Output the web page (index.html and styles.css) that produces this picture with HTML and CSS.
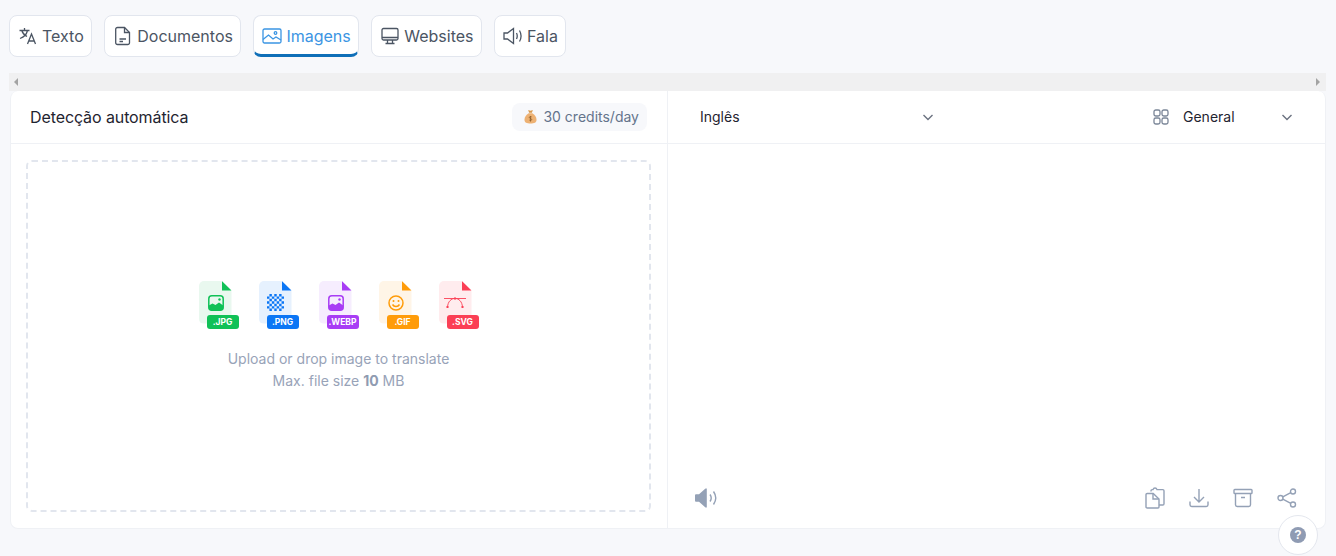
FILE: index.html
```html
<!DOCTYPE html>
<html lang="pt">
<head>
    <meta charset="UTF-8">
    <meta name="viewport" content="width=device-width, initial-scale=1.0">
    <title>Tradutor - Imagens</title>
    <link rel="stylesheet" href="styles.css">
</head>

<body>
    <div class="tabs">
        <button class="tab">
            <svg class="tab-icon" viewBox="0 0 20 20"><path d="M1.500 4.500h10M6.500 2v2.500M9.500 4.500c-.8 3.500-3.500 6.500-7.500 8M3.800 4.500c.8 2.700 2.700 4.700 5.200 6"/><path d="M9.500 18l4-10 4 10M11 15h5"/></svg>
            Texto
        </button>
        <button class="tab">
            <svg class="tab-icon" viewBox="0 0 20 20"><path d="M4.500 1.500h7l5 5v10.200a1.800 1.800 0 0 1-1.800 1.800H4.500a1.800 1.800 0 0 1-1.800-1.800V3.300a1.800 1.800 0 0 1 1.800-1.800z"/><path d="M11.500 1.500v5h5M6.500 13h6.500M6.500 15.500h3.500"/></svg>
            Documentos
        </button>
        <button class="tab active">
            <svg class="tab-icon" viewBox="0 0 20 20"><rect x="1" y="3" width="18" height="14" rx="1.500"/><path d="M1 13.500l5.500-4.500 4.500 4 3-2 5 3"/><circle cx="13.500" cy="7" r="1.300"/></svg>
            Imagens
        </button>
        <button class="tab">
            <svg class="tab-icon" viewBox="0 0 20 20"><rect x="2" y="2.500" width="16" height="11.500" rx="1.500"/><path d="M2 11.500h16M7.500 14v3M12.500 14v3M5.500 17.500h9"/></svg>
            Websites
        </button>
        <button class="tab">
            <svg class="tab-icon" viewBox="0 0 20 20"><path d="M1 7h3.500L10.500 2.500v15L4.500 13H1z"/><path d="M13.500 7c1 2 1 4 0 6M16.500 4.500c2 3.500 2 7.500 0 11"/></svg>
            Fala
        </button>
    </div>

    <div class="scroll-track">
        <span class="scroll-arrow left"></span>
        <span class="scroll-arrow right"></span>
    </div>

    <div class="panel">
        <div class="pane source">
            <div class="pane-header">
                <span class="lang-name">Detecção automática</span>
                <span class="credits">
                    <svg class="credits-icon" viewBox="0 0 14 16">
                        <path class="bag-top" d="M4.500 1l2.500.8L9.500 1 8.500 4h-3z"/>
                        <path class="bag" d="M5 4.500h4c2.500 1.500 4.500 4 4.500 7 0 3-2.500 4-6.500 4s-6.500-1-6.500-4c0-3 2-5.500 4.500-7z"/>
                        <path class="bag-mark" d="M8.300 8.500c-.8-.7-2.600-.6-2.600.6s2.600.8 2.600 2.100-1.800 1.300-2.600.6M7 7.500v6"/>
                    </svg>
                    30 credits/day
                </span>
            </div>
            <div class="pane-body">
                <div class="dropzone">
                    <div class="file-types">
                        <div class="file-type jpg">
                            <span class="file-sheet"></span>
                            <svg class="file-glyph" viewBox="0 0 16 16"><rect x=".8" y=".8" width="14.400" height="14.400" rx="3" class="ln"/><path class="fl" d="M.8 10.500l3.700-2 3 1.500L11 7.500l4.200 3v2a2.700 2.700 0 0 1-2.700 2.700h-9a2.700 2.700 0 0 1-2.700-2.700z"/><circle class="fl" cx="11.500" cy="4.500" r="1.200"/></svg>
                            <span class="file-tag">.JPG</span>
                        </div>
                        <div class="file-type png">
                            <span class="file-sheet"></span>
                            <svg class="file-glyph checker" viewBox="1 1 14 14"><path class="fl" d="M3 1h2v2H3zM7 1h2v2H7zM11 1h2v2h-2zM1 3h2v2H1zM5 3h2v2H5zM9 3h2v2H9zM13 3h2v2h-2zM3 5h2v2H3zM7 5h2v2H7zM11 5h2v2h-2zM1 7h2v2H1zM5 7h2v2H5zM9 7h2v2H9zM13 7h2v2h-2zM3 9h2v2H3zM7 9h2v2H7zM11 9h2v2h-2zM1 11h2v2H1zM5 11h2v2H5zM9 11h2v2H9zM13 11h2v2h-2zM3 13h2v2H3zM7 13h2v2H7zM11 13h2v2h-2z"/></svg>
                            <span class="file-tag">.PNG</span>
                        </div>
                        <div class="file-type webp">
                            <span class="file-sheet"></span>
                            <svg class="file-glyph" viewBox="0 0 16 16"><rect x=".8" y=".8" width="14.400" height="14.400" rx="3" class="ln"/><path class="fl" d="M.8 10.500l3.700-2 3 1.500L11 7.500l4.200 3v2a2.700 2.700 0 0 1-2.700 2.700h-9a2.700 2.700 0 0 1-2.700-2.700z"/><circle class="fl" cx="11.500" cy="4.500" r="1.200"/></svg>
                            <span class="file-tag">.WEBP</span>
                        </div>
                        <div class="file-type gif">
                            <span class="file-sheet"></span>
                            <svg class="file-glyph" viewBox="0 0 16 16"><circle class="ln" cx="8" cy="8" r="7"/><circle class="fl" cx="5.500" cy="6" r="1"/><circle class="fl" cx="10.500" cy="6" r="1"/><path class="ln" d="M4.500 9.500c1.500 2.500 5.500 2.500 7 0"/></svg>
                            <span class="file-tag">.GIF</span>
                        </div>
                        <div class="file-type svg">
                            <span class="file-sheet"></span>
                            <svg class="file-glyph wide" viewBox="0 0 24 16"><path class="thin" d="M1 3.500h22M4.500 12C5 6.500 8 3.500 12 3.500s7 3 7.500 8.500"/><rect class="fl" x="3.500" y="11" width="2" height="2"/><rect class="fl" x="18.500" y="11" width="2" height="2"/><rect class="fl" x="11" y="2.500" width="2" height="2"/></svg>
                            <span class="file-tag">.SVG</span>
                        </div>
                    </div>
                    <p class="drop-hint">Upload or drop image to translate</p>
                    <p class="drop-hint">Max. file size <b>10</b> MB</p>
                </div>
            </div>
        </div>

        <div class="pane target">
            <div class="pane-header">
                <div class="select lang-select">
                    <span>Inglês</span>
                    <svg class="chevron" viewBox="0 0 12 12"><path d="M1.500 4l4.500 4.500L10.500 4"/></svg>
                </div>
                <div class="select model-select">
                    <svg class="grid-icon" viewBox="0 0 16 16"><rect x="1" y="1" width="6" height="6" rx="1.800"/><rect x="9" y="1" width="6" height="6" rx="1.800"/><rect x="1" y="9" width="6" height="6" rx="1.800"/><rect x="9" y="9" width="6" height="6" rx="1.800"/></svg>
                    <span class="model-name">General</span>
                    <svg class="chevron" viewBox="0 0 12 12"><path d="M1.500 4l4.500 4.500L10.500 4"/></svg>
                </div>
            </div>
            <div class="result"></div>
            <div class="toolbar">
                <svg class="speaker" viewBox="0 0 22 20"><path class="solid" d="M0 7.500c0-.8.500-1.300 1.300-1.300H4L10.500 0.500h1.300v19h-1.300L4 13.800H1.300c-.8 0-1.300-.5-1.300-1.300z"/><path d="M15 6.500c1.400 2 1.400 5 0 7M18.500 3.500c2.800 4 2.800 9 0 13"/></svg>
                <div class="tools">
                    <svg viewBox="0 0 20 22"><path d="M6 4.500V3.800c0-.7.500-1.200 1.200-1.200H8c.3-1 1-1.600 2-1.600s1.700.6 2 1.600h.8L17.800 2.600c.7 0 1.200.5 1.200 1.200v13c0 .7-.5 1.200-1.200 1.200H14"/><path d="M2.200 6.500h6L14 12v8c0 .6-.5 1-1 1H2.200c-.6 0-1.200-.5-1.200-1V7.500c0-.5.600-1 1.200-1z"/><path d="M8 6.500V12h6"/></svg>
                    <svg viewBox="0 0 20 20"><path d="M10 1v12.500M5 9l5 5 5-5M1 13.500v3.300c0 1 .8 1.700 1.700 1.700h14.600c.9 0 1.700-.7 1.700-1.700v-3.300"/></svg>
                    <svg viewBox="0 0 20 20"><rect x="1" y="1.500" width="18" height="4" rx=".8"/><path d="M2.500 5.500v11.300c0 .9.800 1.700 1.700 1.700h11.600c.9 0 1.700-.8 1.700-1.700V5.500M8 9.500h4"/></svg>
                    <svg viewBox="0 0 20 20"><circle cx="16" cy="3.500" r="2.500"/><circle cx="3.500" cy="10" r="2.500"/><circle cx="16" cy="16.500" r="2.500"/><path d="M5.800 8.800l8-4.200M5.800 11.200l8 4.200"/></svg>
                </div>
            </div>
        </div>
    </div>

    <button class="help-button"><span class="help-mark">?</span></button>
</body>
</html>
```

FILE: styles.css
```css
* { margin: 0; padding: 0; box-sizing: border-box; }

body {
    font-family: 'Inter', 'Liberation Sans', sans-serif;
    background: #f7f8fb;
    color: #1f2937;
    height: 556px;
    overflow: hidden;
    padding: 15px 10px 0 9px;
}

.tabs {
    display: flex;
    gap: 12px;
    margin-bottom: 16px;
}

.tab {
    display: flex;
    align-items: center;
    gap: 4px;
    height: 42px;
    padding: 0 7.500px 0 8px;
    background: #ffffff;
    border: 1px solid #e2e6ee;
    border-radius: 8px;
    font-family: inherit;
    font-size: 16px;
    color: #4b5563;
    white-space: nowrap;
}

.tab-icon {
    width: 20px;
    height: 20px;
    fill: none;
    stroke: #4b5563;
    stroke-width: 1.300;
}

.tab.active {
    color: #3b95e3;
    border-bottom: 3px solid #0f6fb8;
    padding-top: 2px;
}

.tab.active .tab-icon { stroke: #3b95e3; }

.scroll-track {
    display: flex;
    justify-content: space-between;
    align-items: center;
    height: 18px;
    padding: 0 6px 0 5px;
    background: #f0f0f1;
}

.scroll-arrow {
    width: 0;
    height: 0;
    border-top: 4px solid transparent;
    border-bottom: 4px solid transparent;
}

.scroll-arrow.left { border-right: 4px solid #a3a3a3; }
.scroll-arrow.right { border-left: 4px solid #a3a3a3; }

.panel {
    display: flex;
    height: 438px;
    margin-left: 1px;
    background: #ffffff;
    border: 1px solid #eff1f5;
    border-top: none;
    border-radius: 8px;
}

.pane {
    display: flex;
    flex-direction: column;
    width: 50%;
}

.pane.source {
    width: 657px;
    flex: none;
    border-right: 1px solid #eff1f5;
}

.pane.target { flex: 1; }

.pane-header {
    display: flex;
    align-items: center;
    justify-content: space-between;
    height: 53px;
    padding-bottom: 1px;
    flex: none;
    border-bottom: 1px solid #eff1f5;
}

.source .pane-header { padding-left: 19px; padding-right: 20px; }
.target .pane-header { padding-left: 32px; padding-right: 32px; }

.lang-name {
    font-size: 16px;
    letter-spacing: -0.100px;
    color: #1f2430;
}

.credits {
    display: flex;
    align-items: center;
    gap: 6px;
    height: 28px;
    padding: 0 8px 0 12px;
    background: #f7f8fb;
    border-radius: 8px;
    font-size: 14px;
    color: #64748b;
}

.credits-icon { width: 13px; height: 15px; }
.bag-top { fill: #d99a4e; }
.bag { fill: #edb173; }
.bag-mark { fill: none; stroke: #8a5a26; stroke-width: .8; }

.pane-body {
    flex: 1;
    padding: 16px 16px 16px 15px;
}

.dropzone {
    display: flex;
    flex-direction: column;
    align-items: center;
    justify-content: center;
    height: 352px;
    border: 2px dashed #e2e6ee;
    border-radius: 6px;
}

.file-types {
    display: flex;
    gap: 20px;
    margin-bottom: 19px;
}

.file-type {
    position: relative;
    width: 40px;
    height: 48px;
}

.file-sheet {
    position: absolute;
    left: 0;
    top: 0;
    width: 33px;
    height: 43px;
    border-radius: 5px;
    clip-path: polygon(0 0, 70% 0, 100% 22%, 100% 100%, 0 100%);
    background: var(--tint);
}

.file-sheet::after {
    content: "";
    position: absolute;
    right: 0;
    top: 0;
    width: 10px;
    height: 10px;
    background: var(--main);
    clip-path: polygon(0 0, 100% 100%, 0 100%);
}

.file-glyph {
    position: absolute;
    left: 9px;
    top: 14px;
    width: 16px;
    height: 16px;
}

.file-glyph.checker {
    left: 8px;
    top: 13px;
    width: 17px;
    height: 17px;
}

.file-glyph.wide {
    left: 4px;
    width: 24px;
}

.file-glyph .ln { fill: none; stroke: var(--main); stroke-width: 1.500; }
.file-glyph .thin { fill: none; stroke: var(--main); stroke-width: .9; }
.file-glyph .fl { fill: var(--main); }

.file-tag {
    position: absolute;
    left: 8px;
    top: 34px;
    width: 32px;
    height: 14px;
    border-radius: 3px;
    background: var(--main);
    color: #ffffff;
    font-size: 8.500px;
    font-weight: 700;
    line-height: 14px;
    text-align: center;
}

.jpg { --main: #10c157; --tint: #e9f8ef; }
.png { --main: #0b76f5; --tint: #e6f1fe; }
.webp { --main: #a83df5; --tint: #f6edfe; }
.gif { --main: #ff9c0a; --tint: #fff5e7; }
.svg { --main: #fb3f55; --tint: #ffecee; }

.drop-hint {
    font-size: 14px;
    line-height: 22px;
    color: #98a3b8;
}

.drop-hint b {
    font-weight: 700;
    color: #8f9bb1;
}

.select {
    display: flex;
    align-items: center;
    font-size: 14px;
    color: #1f2430;
}

.lang-select {
    justify-content: space-between;
    width: 234px;
}

.model-name { width: 98px; margin-left: 14px; }

.grid-icon {
    width: 16px;
    height: 16px;
    fill: none;
    stroke: #7b8698;
    stroke-width: 1.300;
}

.chevron {
    width: 12px;
    height: 12px;
    fill: none;
    stroke: #6b7280;
    stroke-width: 1.400;
}

.result { flex: 1; }

.toolbar {
    display: flex;
    align-items: center;
    justify-content: space-between;
    height: 60px;
    padding: 0 28px 0 27px;
    flex: none;
}

.toolbar svg {
    fill: none;
    stroke: #94a1b6;
    stroke-width: 1.400;
}

.speaker { width: 22px; height: 20px; }
.speaker .solid { fill: #94a1b6; stroke: none; }

.tools {
    display: flex;
    align-items: center;
    gap: 24px;
}

.tools svg {
    width: 20px;
    height: 22px;
}

.help-button {
    position: absolute;
    left: 1278px;
    top: 515px;
    display: flex;
    align-items: center;
    justify-content: center;
    width: 40px;
    height: 40px;
    background: #ffffff;
    border: 1px solid #e4e7ee;
    border-radius: 50%;
}

.help-mark {
    width: 16px;
    height: 16px;
    border-radius: 50%;
    background: #8f9bb3;
    color: #ffffff;
    font-family: inherit;
    font-size: 12px;
    font-weight: 700;
    line-height: 16px;
    text-align: center;
}
```
